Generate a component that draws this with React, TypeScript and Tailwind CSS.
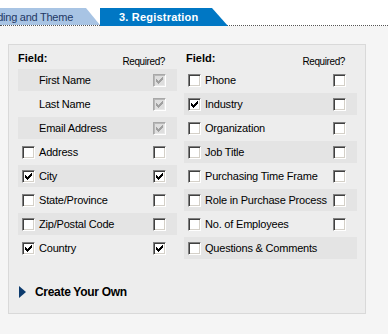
import React from "react";

type Row = { label: string; fixed?: boolean; checked?: boolean; req?: boolean; noReq?: boolean };

const left: Row[] = [
  { label: "First Name", fixed: true },
  { label: "Last Name", fixed: true },
  { label: "Email Address", fixed: true },
  { label: "Address" },
  { label: "City", checked: true, req: true },
  { label: "State/Province" },
  { label: "Zip/Postal Code" },
  { label: "Country", checked: true, req: true },
];

const right: Row[] = [
  { label: "Phone" },
  { label: "Industry", checked: true },
  { label: "Organization" },
  { label: "Job Title" },
  { label: "Purchasing Time Frame" },
  { label: "Role in Purchase Process" },
  { label: "No. of Employees" },
  { label: "Questions & Comments", noReq: true },
];

const CHECK = "M6 0h1v1h-1z M5 1h2v1h-2z M0 2h1v1h-1z M4 2h3v1h-3z M0 3h2v1h-2z M3 3h3v1h-3z M0 4h5v1h-5z M1 5h3v1h-3z M2 6h1v1h-1z";

function Box({ checked, disabled }: { checked?: boolean; disabled?: boolean }) {
  return (
    <span
      className={
        disabled
          ? "flex w-[13px] h-[13px] shrink-0 border border-t-[#a8a8a8] border-l-[#a8a8a8] border-b-white border-r-white bg-[#dedede] shadow-[inset_1px_1px_0_#b8b8b8,inset_-1px_-1px_0_#e8e8e8]"
          : "flex w-[13px] h-[13px] shrink-0 border border-t-[#808080] border-l-[#808080] border-b-white border-r-white bg-white shadow-[inset_1px_1px_0_#404040,inset_-1px_-1px_0_#d4d0c8]"
      }
    >
      {checked && (
        <svg width="7" height="7" viewBox="0 0 7 7" className="ml-[2px] mt-[2px]" shapeRendering="crispEdges">
          <path d={CHECK} fill={disabled ? "#a0a0a0" : "#000"} />
        </svg>
      )}
    </span>
  );
}

function Column({ rows, width, shadeOdd, headerPad }: { rows: Row[]; width: string; shadeOdd: boolean; headerPad: string }) {
  return (
    <div className={`flex flex-col gap-[2px] ${width}`}>
      <div className="flex h-[15px] justify-between pr-[12px]">
        <span className={`text-[11px] leading-[13px] font-bold ${headerPad}`}>Field:</span>
        <span className="text-[10px] leading-[12px] pt-[4px] tracking-[-0.4px]">Required?</span>
      </div>
      {rows.map((r, i) => {
        const shaded = shadeOdd ? i % 2 === 1 : i % 2 === 0;
        return (
          <div
            key={r.label}
            className={`flex h-[22px] items-center pl-[4px] pr-[11px] ${shaded ? "bg-[#e4e4e4]" : ""}`}
          >
            {r.fixed ? <span className="w-[13px] shrink-0" /> : <Box checked={r.checked} />}
            <span className="ml-[4px] flex-1 whitespace-nowrap text-[11px] leading-[13px] tracking-[-0.2px]">{r.label}</span>
            {r.noReq ? null : <Box checked={r.fixed || r.req} disabled={r.fixed} />}
          </div>
        );
      })}
    </div>
  );
}

export default function App() {
  return (
    <div className="w-[388px] h-[334px] overflow-hidden bg-[#f5f5f5] text-black font-['Liberation_Sans',Arial,sans-serif]">
      <div className="flex h-[26px] items-end bg-white border-b border-dotted border-b-[#555]">
        <div className="ml-[-60px] flex h-[17px] w-[160px] justify-end pr-[27px] pt-[1px] bg-[#a8c4e4] text-[#1f3864] text-[11px] leading-[17px] tracking-[-0.25px] whitespace-nowrap [clip-path:polygon(0_0,146px_0,160px_100%,0_100%)]">
          2. Branding and Theme
        </div>
        <div className="mb-[-1px] flex h-[18px] w-[128px] pl-[19px] pt-[1px] bg-[#0077c4] text-white font-bold text-[11px] leading-[17px] tracking-[0.2px] whitespace-nowrap [clip-path:polygon(0_0,112px_0,128px_100%,0_100%)]">
          3. Registration
        </div>
      </div>
      <div className="ml-[8px] mt-[18px] h-[270px] w-[358px] border border-[#d9d9d9] bg-[#ededed] pl-[9px] pt-[7px]">
        <div className="flex gap-[7px]">
          <Column rows={left} width="w-[159px]" shadeOdd={false} headerPad="" />
          <Column rows={right} width="w-[173px]" shadeOdd={true} headerPad="pl-[2px]" />
        </div>
        <div className="mt-[23px] flex h-[20px] items-center">
          <span className="ml-[1px] h-0 w-0 border-y-[6px] border-y-transparent border-l-[7px] border-l-[#0d3b6e]" />
          <span className="ml-[9px] text-[12px] font-bold tracking-[-0.3px]">Create Your Own</span>
        </div>
      </div>
    </div>
  );
}
